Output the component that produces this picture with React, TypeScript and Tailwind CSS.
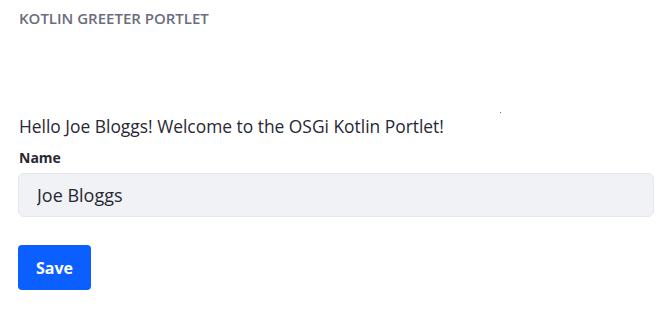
export default function App() {
  return (
    <div className="relative min-h-[311px] w-[668px] bg-white font-['Segoe_UI','Open_Sans',sans-serif] text-[#272833]">
      <div className="px-[19px] pt-[9px]">
        <h2 className="text-[15px] font-semibold uppercase leading-[18px] text-[#6b6c7e]">
          Kotlin Greeter Portlet
        </h2>
      </div>

      <div className="px-[18px] pt-[87px]">
        <p className="mb-[8px] pl-px text-[17.4px] leading-[24px]">
          Hello Joe Bloggs! Welcome to the OSGi Kotlin Portlet!
        </p>
        <form className="flex flex-col" onSubmit={(e) => e.preventDefault()}>
          <label className="mb-[5px] pl-px pt-[2px] text-[14px] font-bold leading-[20px]">Name</label>
          <input
            defaultValue="Joe Bloggs"
            className="h-[44px] w-[636px] rounded-[6px] border border-[#e7e7ed] bg-[#f1f2f5] px-[18px] text-[18px] text-[#272833] outline-none"
          />
          <div className="pt-[28px]">
            <button className="h-[45px] w-[73px] rounded-[4px] bg-[#0b5fff] text-[16px] font-bold text-white">
              Save
            </button>
          </div>
        </form>
      </div>

      {/* stray speck in the screenshot */}
      <span className="absolute left-[500px] top-[112px] h-px w-px bg-[#8a6a3a]" />
    </div>
  );
}
